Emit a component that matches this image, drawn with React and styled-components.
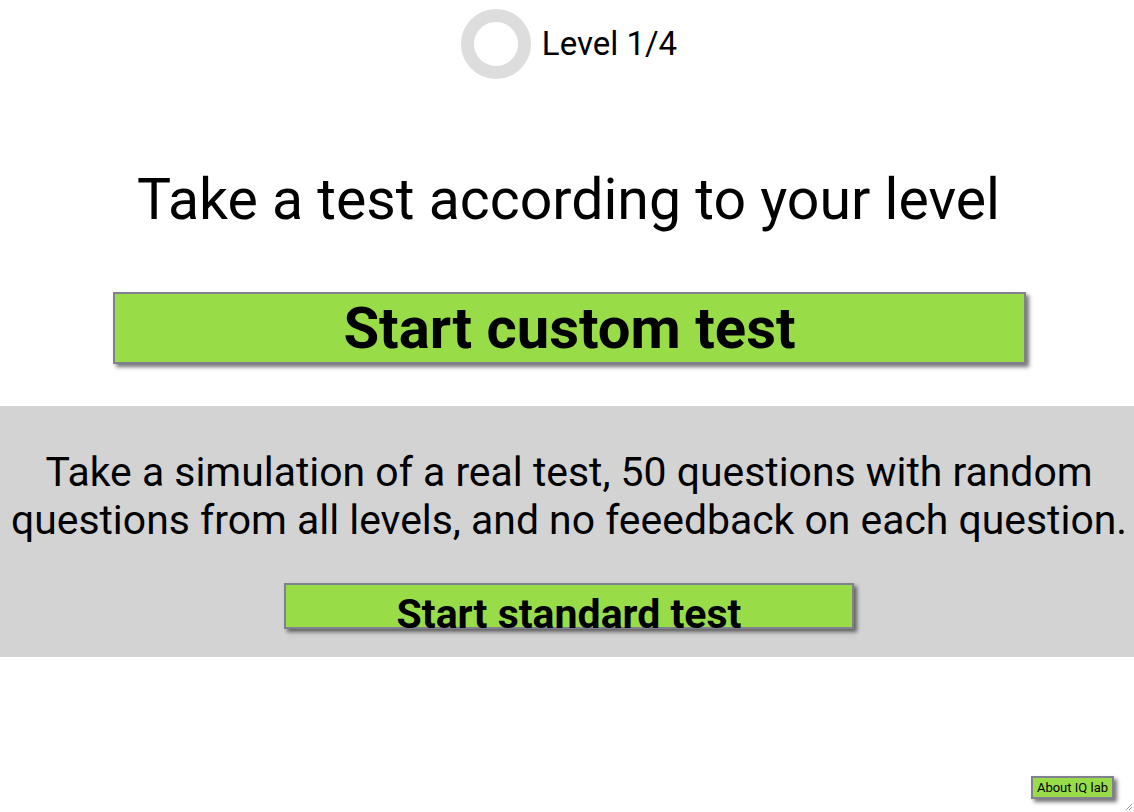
import React from "react";
import styled, { createGlobalStyle } from "styled-components";

const Global = createGlobalStyle`
  html, body { margin: 0; padding: 0; background: #fff; }
  body { font-family: Roboto, "Noto Sans", sans-serif; color: #000; }
  * { box-sizing: border-box; }
`;

const Page = styled.div`
  width: 1134px;
  height: 812px;
  position: relative;
  overflow: hidden;
  display: flex;
  flex-direction: column;
`;

const Header = styled.div`
  display: flex;
  justify-content: center;
  align-items: flex-start;
  gap: 11px;
  padding: 9px 0 0 4px;
  height: 80px;
`;

const Ring = styled.div`
  width: 70px;
  height: 70px;
  border-radius: 50%;
  border: 13px solid #dddddd;
`;

const LevelText = styled.div`
  font-size: 33px;
  line-height: 70px;
`;

const Title = styled.h1`
  margin: 88px 0 0;
  padding-left: 3px;
  font-weight: 400;
  font-size: 57.2px;
  line-height: 64px;
  text-align: center;
`;

const GreenButton = styled.button`
  display: block;
  margin: ${(p) => p.$margin};
  width: ${(p) => p.$width}px;
  height: ${(p) => p.$height}px;
  background: #98dd48;
  border: 2px solid #808090;
  box-shadow: 3px 3px 4px rgba(0, 0, 0, 0.55);
  font-family: Roboto, sans-serif;
  font-weight: 700;
  font-size: ${(p) => p.$size}px;
  color: #000;
  padding: ${(p) => p.$padTop || 0}px 0 0;
  line-height: 1;
  cursor: pointer;
`;

const Gray = styled.section`
  margin-top: 42px;
  background: #d3d3d3;
  height: 251px;
  display: flex;
  flex-direction: column;
  align-items: center;
  padding: 42px 0 0 4px;
`;

const Para = styled.p`
  margin: 0;
  font-size: 40.9px;
  line-height: 48px;
  text-align: center;
  white-space: nowrap;
`;

const AboutButton = styled.button`
  position: absolute;
  right: 20px;
  bottom: 13px;
  background: #98dd48;
  border: 2px solid #808090;
  box-shadow: 3px 3px 4px rgba(0, 0, 0, 0.55);
  font-family: Roboto, sans-serif;
  font-size: 13px;
  line-height: 15px;
  padding: 2px 4px;
  color: #000;
`;

const Grip = styled.svg`
  position: absolute;
  right: 1px;
  bottom: 1px;
`;

export default function App() {
  return (
    <Page>
      <Global />
      <Header>
        <Ring />
        <LevelText>Level 1/4</LevelText>
      </Header>
      <Title>Take a test according to your level</Title>
      <GreenButton $margin="60px 0 0 113px" $width={913} $height={72} $size={58}>
        Start custom test
      </GreenButton>
      <Gray>
        <Para>
          Take a simulation of a real test, 50 questions with random
          <br />
          questions from all levels, and no feeedback on each question.
        </Para>
        <GreenButton $margin="39px 0 0 0" $width={570} $height={46} $size={41} $padTop={9}>
          Start standard test
        </GreenButton>
      </Gray>
      <AboutButton>About IQ lab</AboutButton>
      <Grip width="8" height="8" viewBox="0 0 8 8">
        <path d="M7 1 L1 7 M7 4 L4 7" stroke="#999" strokeWidth="1" />
      </Grip>
    </Page>
  );
}
